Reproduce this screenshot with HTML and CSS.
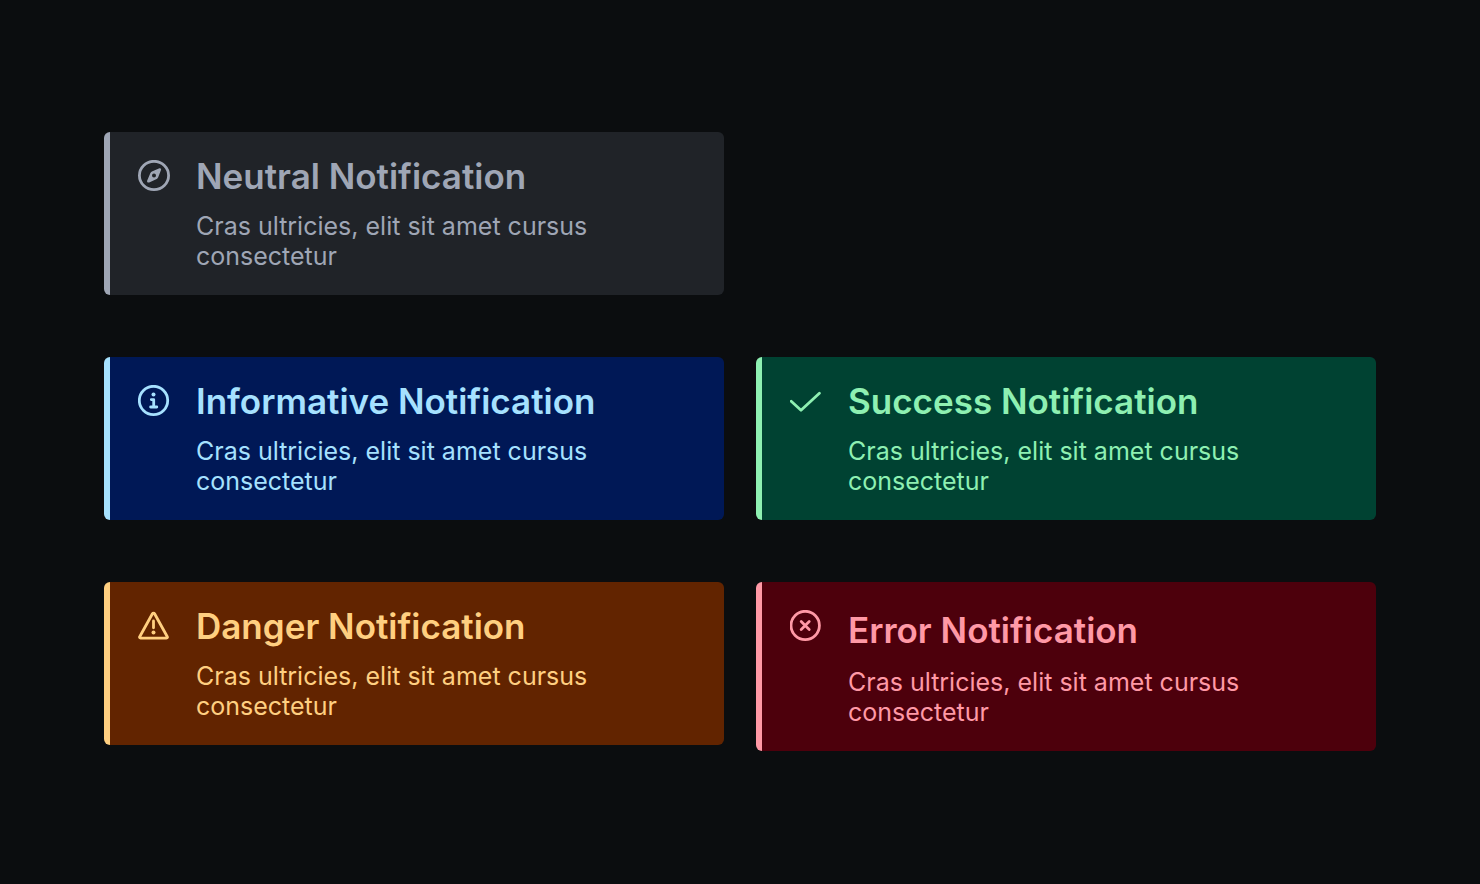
FILE: index.html
```html
<!DOCTYPE html>
<html lang="en">
<head>
<meta charset="utf-8">
<meta name="viewport" content="width=device-width, initial-scale=1">
<title>Notifications</title>
<link rel="stylesheet" href="styles.css">
</head>
<body>
<main class="board">
  <section class="note note-neutral">
    <svg class="note-icon" viewBox="0 0 32 32" aria-hidden="true">
      <ellipse cx="16" cy="15.5" rx="14.6" ry="14.2"/>
      <path class="solid" fill-rule="evenodd" d="M21.4 8.3c1.2-.4 2.1.5 1.6 1.7l-2.8 7.2c-.3.8-.8 1.3-1.5 1.7l-7.5 3.5c-1.4.6-2.6-.5-2-1.9l3.2-7.4c.3-.7.8-1.2 1.5-1.6zM16 13.5a2 2 0 1 0 0 4 2 2 0 0 0 0-4z"/>
    </svg>
    <div class="note-text">
      <h2 class="note-title">Neutral Notification</h2>
      <p class="note-body">Cras ultricies, elit sit amet cursus consectetur</p>
    </div>
  </section>
  <section class="note note-info">
    <svg class="note-icon" viewBox="0 0 32 32" aria-hidden="true">
      <circle cx="15.5" cy="15.5" r="14.2"/>
      <circle class="solid" cx="15.5" cy="9.6" r="2"/>
      <path d="M13.3 14.6h2.4v7.2M12.6 22h6.2"/>
    </svg>
    <div class="note-text">
      <h2 class="note-title">Informative Notification</h2>
      <p class="note-body">Cras ultricies, elit sit amet cursus consectetur</p>
    </div>
  </section>
  <section class="note note-success">
    <svg class="note-icon" viewBox="0 0 32 32" aria-hidden="true">
      <path d="M1.2 16.3 11 25.2 29.4 8.2"/>
    </svg>
    <div class="note-text">
      <h2 class="note-title">Success Notification</h2>
      <p class="note-body">Cras ultricies, elit sit amet cursus consectetur</p>
    </div>
  </section>
  <section class="note note-danger">
    <svg class="note-icon" viewBox="0 0 32 32" aria-hidden="true">
      <path d="M14.4 3.7 1.7 26.7c-.4.7 0 1.4.8 1.4h26c.8 0 1.2-.7.8-1.4L16.6 3.7c-.5-.8-1.7-.8-2.2 0zM15.5 11v6.8"/>
      <circle class="solid" cx="15.5" cy="22.5" r="2"/>
    </svg>
    <div class="note-text">
      <h2 class="note-title">Danger Notification</h2>
      <p class="note-body">Cras ultricies, elit sit amet cursus consectetur</p>
    </div>
  </section>
  <section class="note note-error">
    <svg class="note-icon" viewBox="0 0 32 32" aria-hidden="true">
      <circle cx="15.2" cy="15.5" r="14.2"/>
      <path d="m11.2 11.6 8 7.8M19.2 11.6l-8 7.8"/>
    </svg>
    <div class="note-text">
      <h2 class="note-title">Error Notification</h2>
      <p class="note-body">Cras ultricies, elit sit amet cursus consectetur</p>
    </div>
  </section>
</main>
</body>
</html>
```

FILE: styles.css
```css
* {
  box-sizing: border-box;
}

body {
  margin: 0;
  min-height: 100vh;
  background: #0b0d0f;
  font-family: Inter, "Liberation Sans", sans-serif;
}

.board {
  display: grid;
  grid-template-columns: 1fr 1fr;
  align-items: start;
  gap: 62px 32px;
  padding: 132px 104px;
}

.note {
  display: flex;
  gap: 26px;
  padding: 24px 28px 24px 34px;
  border-radius: 6px;
  overflow: hidden;
  background: linear-gradient(to right, currentColor 6px, var(--surface) 6px);
}

.note-neutral {
  grid-column: 1 / -1;
  width: calc(50% - 16px);
  --surface: #202328;
  color: #9fa6b5;
}

.note-info {
  --surface: #001856;
  color: #a6e1ff;
}

.note-success {
  --surface: #004232;
  color: #8ef0b2;
}

.note-danger {
  --surface: #622400;
  color: #ffcf80;
}

.note-error {
  --surface: #4d000c;
  color: #ff99a6;
}

.note-icon {
  flex: none;
  width: 32px;
  height: 32px;
  margin-top: 4px;
  fill: none;
  stroke: currentColor;
  stroke-width: 2.8;
  stroke-linecap: round;
  stroke-linejoin: round;
}

.note-icon .solid {
  fill: currentColor;
  stroke: none;
}

.note-text {
  flex: 1;
  max-width: 440px;
}

.note-title {
  margin: 0 0 15px;
  font-size: 35px;
  line-height: 40px;
  font-weight: 600;
}

.note-body {
  margin: 0;
  font-size: 25px;
  line-height: 30px;
}

.note-error .note-title {
  margin-bottom: 13px;
  line-height: 48px;
}
```
